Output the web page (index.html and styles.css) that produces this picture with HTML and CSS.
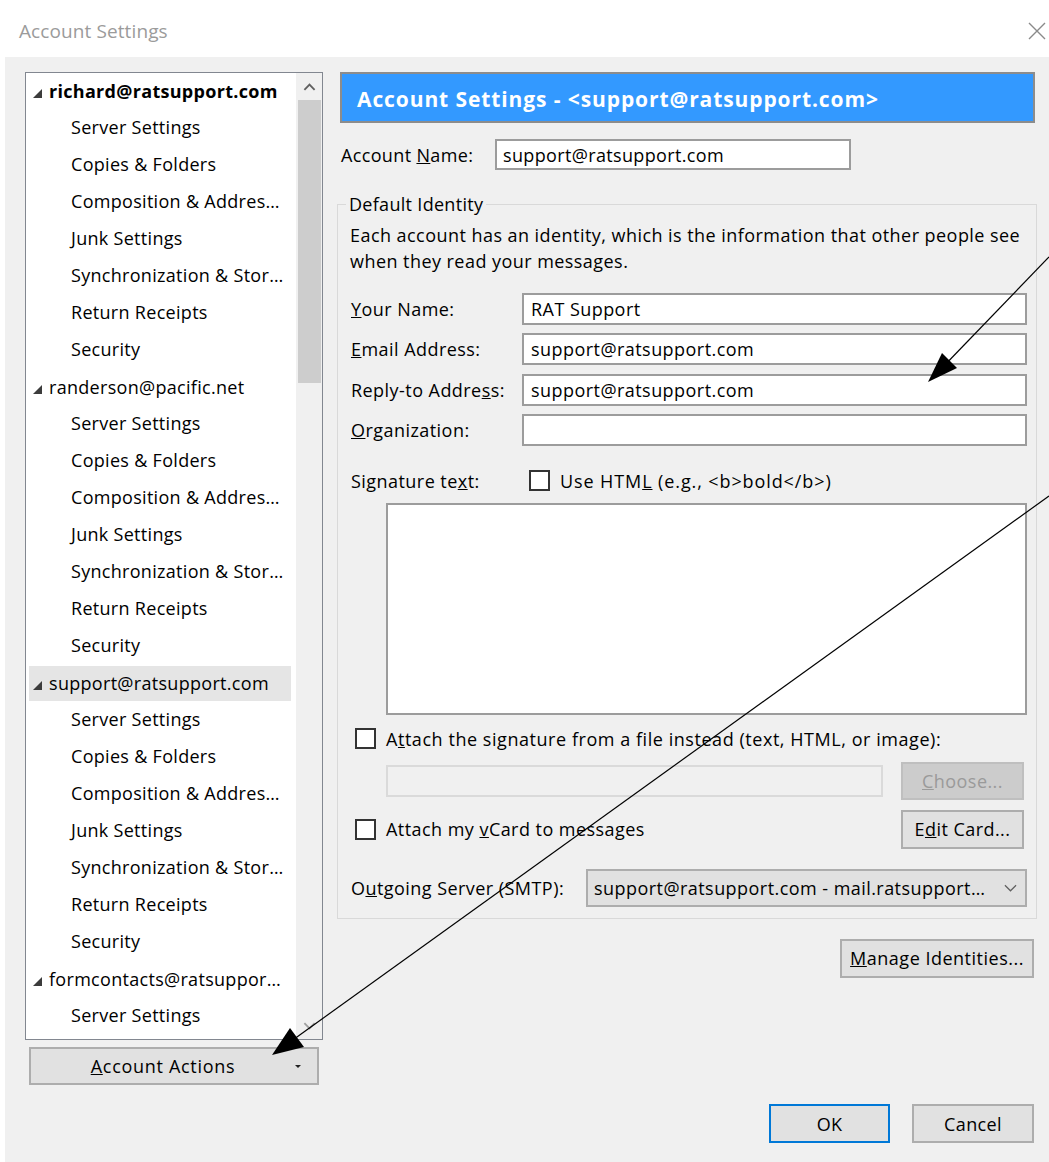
FILE: index.html
```html
<!DOCTYPE html>
<html lang="en">
<head>
<meta charset="utf-8">
<title>Account Settings</title>
<link rel="stylesheet" href="styles.css">
</head>
<body>
<div class="window">
  <header class="titlebar">
    <span class="title">Account Settings</span>
    <svg class="close" viewBox="0 0 18 18" aria-hidden="true">
      <path d="M1 1 L17 17 M17 1 L1 17" stroke="#8a8a8a" stroke-width="1.4" fill="none"/>
    </svg>
  </header>

  <div class="dialog">
    <aside class="sidebar">
      <div class="tree">
        <ul class="tree-list">
          <li class="acct bold"><span class="twisty"></span>richard@ratsupport.com</li>
          <li>Server Settings</li>
          <li>Copies &amp; Folders</li>
          <li>Composition &amp; Addres…</li>
          <li>Junk Settings</li>
          <li>Synchronization &amp; Stor…</li>
          <li>Return Receipts</li>
          <li>Security</li>
          <li class="acct"><span class="twisty"></span>randerson@pacific.net</li>
          <li>Server Settings</li>
          <li>Copies &amp; Folders</li>
          <li>Composition &amp; Addres…</li>
          <li>Junk Settings</li>
          <li>Synchronization &amp; Stor…</li>
          <li>Return Receipts</li>
          <li>Security</li>
          <li class="acct sel"><span class="twisty"></span>support@ratsupport.com</li>
          <li>Server Settings</li>
          <li>Copies &amp; Folders</li>
          <li>Composition &amp; Addres…</li>
          <li>Junk Settings</li>
          <li>Synchronization &amp; Stor…</li>
          <li>Return Receipts</li>
          <li>Security</li>
          <li class="acct"><span class="twisty"></span>formcontacts@ratsuppor…</li>
          <li>Server Settings</li>
        </ul>
        <div class="scrollbar">
          <div class="sb-arrow">
            <svg viewBox="0 0 14 10" aria-hidden="true"><path d="M1.5 8 L7 2.5 L12.5 8" stroke="#606060" stroke-width="2" fill="none"/></svg>
          </div>
          <div class="sb-thumb"></div>
          <div class="sb-track"></div>
          <div class="sb-arrow">
            <svg viewBox="0 0 14 10" aria-hidden="true"><path d="M1.5 2 L7 7.5 L12.5 2" stroke="#a0a0a0" stroke-width="2" fill="none"/></svg>
          </div>
        </div>
      </div>
      <button class="btn actions"><span class="lbl"><u>A</u>ccount Actions</span><span class="caret"></span></button>
    </aside>

    <main class="panel">
      <div class="banner">Account Settings - &lt;support@ratsupport.com&gt;</div>

      <div class="acct-name">
        <span class="acct-label">Account <u>N</u>ame:</span>
        <div class="field name-field">support@ratsupport.com</div>
      </div>

      <fieldset class="identity">
        <legend>Default Identity</legend>
        <p class="desc">Each account has an identity, which is the information that other people see<br>when they read your messages.</p>

        <div class="rows">
          <div class="row"><span class="lab"><u>Y</u>our Name:</span><div class="field">RAT Support</div></div>
          <div class="row"><span class="lab"><u>E</u>mail Address:</span><div class="field">support@ratsupport.com</div></div>
          <div class="row"><span class="lab">Reply-to Addre<u>s</u>s:</span><div class="field">support@ratsupport.com</div></div>
          <div class="row"><span class="lab"><u>O</u>rganization:</span><div class="field"></div></div>
        </div>

        <div class="sig-row">
          <span class="sig-lab">Signature te<u>x</u>t:</span>
          <span class="check"></span>
          <span class="html-hint">Use HTM<u>L</u> (e.g., &lt;b&gt;bold&lt;/b&gt;)</span>
        </div>
        <div class="sig-box"></div>

        <div class="attach">
          <span class="check"></span>
          <span>A<u>t</u>tach the signature from a file instead (text, HTML, or image):</span>
        </div>
        <div class="file-row">
          <div class="file-field"></div>
          <button class="btn small disabled"><u>C</u>hoose...</button>
        </div>

        <div class="vcard-row">
          <div class="vcard">
            <span class="check"></span>
            <span>Attach my <u>v</u>Card to messages</span>
          </div>
          <button class="btn small tall">E<u>d</u>it Card...</button>
        </div>

        <div class="smtp-row">
          <span class="smtp-lab">O<u>u</u>tgoing Server (SMTP):</span>
          <div class="select">
            <span>support@ratsupport.com - mail.ratsupport…</span>
            <svg viewBox="0 0 14 8" aria-hidden="true"><path d="M1 1 L7 7 L13 1" stroke="#606060" stroke-width="1.3" fill="none"/></svg>
          </div>
        </div>
      </fieldset>

      <button class="btn manage"><u>M</u>anage Identities...</button>

      <div class="footer">
        <button class="btn ok">OK</button>
        <button class="btn cancel">Cancel</button>
      </div>
    </main>
  </div>

  <svg class="annotations" viewBox="0 0 1049 1162" aria-hidden="true">
    <line x1="1049" y1="257" x2="940" y2="370" stroke="#000" stroke-width="1.2"/>
    <polygon points="928,382 942,353 957,368" fill="#000"/>
    <line x1="1049" y1="496" x2="290" y2="1042" stroke="#000" stroke-width="1.2"/>
    <polygon points="272,1055 290,1028 304,1047" fill="#000"/>
  </svg>
</div>
</body>
</html>
```

FILE: styles.css
```css
body {
  margin: 0;
  background: #ffffff;
  font-family: "Open Sans", "Noto Sans", sans-serif;
  font-size: 18px;
  letter-spacing: 0.35px;
  color: #000;
}

.window {
  position: relative;
  width: 1049px;
  height: 1162px;
  overflow: hidden;
}

/* ---- title bar ---- */
.titlebar {
  height: 57px;
  box-sizing: border-box;
  padding: 5px 3px 0 19px;
  display: flex;
  align-items: center;
  justify-content: space-between;
}

.title {
  color: #9b9b9b;
  font-size: 19px;
  letter-spacing: 0.1px;
}

.close {
  width: 18px;
  height: 18px;
}

/* ---- dialog body ---- */
.dialog {
  margin-left: 5px;
  height: 1105px;
  box-sizing: border-box;
  background: #f0f0f0;
  padding: 15px 12px 0 20px;
  display: flex;
  gap: 14px;
}

.sidebar {
  width: 298px;
  flex: none;
  display: flex;
  flex-direction: column;
  gap: 7px;
}

.tree {
  height: 968px;
  box-sizing: border-box;
  border: 1px solid #828790;
  background: #fff;
  display: flex;
}

.tree-list {
  flex: 1;
  margin: 0;
  padding: 0 5px 0 3px;
  list-style: none;
  overflow: hidden;
  letter-spacing: 0.3px;
}

.tree-list li {
  height: 37px;
  line-height: 35px;
  white-space: nowrap;
  padding-left: 42px;
}

.tree-list li.acct {
  padding-left: 4px;
  display: flex;
  align-items: center;
  gap: 7px;
}

.tree-list li.bold {
  font-weight: 700;
}

.tree-list li.sel {
  background: linear-gradient(#e5e5e5, #e5e5e5) 0 1px / 100% 35px no-repeat;
}

.twisty {
  width: 0;
  height: 0;
  border-left: 9px solid transparent;
  border-bottom: 9px solid #3c3c3c;
  margin-top: 4px;
}

.scrollbar {
  width: 26px;
  flex: none;
  background: #f0f0f0;
  display: flex;
  flex-direction: column;
  align-items: center;
}

.sb-arrow {
  height: 27px;
  display: flex;
  align-items: center;
  justify-content: center;
}

.sb-arrow svg {
  width: 13px;
  height: 10px;
}

.sb-thumb {
  width: 23px;
  height: 283px;
  background: #cdcdcd;
}

.sb-track {
  flex: 1;
}

/* ---- buttons ---- */
.btn {
  font: inherit;
  letter-spacing: inherit;
  color: #000;
  background: #e1e1e1;
  border: 2px solid #adadad;
  padding: 0;
  box-sizing: border-box;
  display: flex;
  align-items: center;
  justify-content: center;
}

.actions {
  margin: 0 4px;
  height: 38px;
  letter-spacing: 0.7px;
}

.actions .lbl {
  flex: 1;
  text-align: center;
}

.caret {
  width: 0;
  height: 0;
  border-left: 3px solid transparent;
  border-right: 3px solid transparent;
  border-top: 3px solid #222;
  margin-right: 16px;
}

/* ---- right panel ---- */
.panel {
  width: 700px;
  flex: none;
  display: flex;
  flex-direction: column;
}

.banner {
  height: 51px;
  box-sizing: border-box;
  margin: 0 2px 0 3px;
  background: #3399ff;
  border: 2px solid #8c8c8c;
  color: #fff;
  font-weight: 700;
  font-size: 21px;
  letter-spacing: 0.9px;
  padding: 2px 0 0 15px;
  display: flex;
  align-items: center;
  white-space: nowrap;
}

.acct-name {
  margin-top: 16px;
  padding-left: 4px;
  display: flex;
  align-items: center;
}

.acct-label {
  width: 154px;
}

.field {
  height: 32px;
  box-sizing: border-box;
  border: 2px solid #9c9c9c;
  background: #fff;
  padding-left: 7px;
  display: flex;
  align-items: center;
  white-space: nowrap;
  flex: 1;
}

.name-field {
  flex: none;
  width: 356px;
  height: 31px;
  padding-left: 6px;
}

.identity {
  margin: 21px 0 0;
  padding: 0 9px 11px 12px;
  border: 1px solid #d9d9d9;
  min-width: 0;
  letter-spacing: 0.45px;
}

.identity legend {
  padding: 0 3px;
  margin-left: -4px;
  line-height: 26px;
  letter-spacing: 0.3px;
}

.desc {
  margin: 5px 0 0;
  line-height: 26px;
  white-space: nowrap;
}

.rows {
  margin-top: 19px;
  display: flex;
  flex-direction: column;
  gap: 8.3px;
}

.row {
  display: flex;
  align-items: center;
}

.lab {
  width: 172px;
  flex: none;
  padding-left: 1px;
  box-sizing: border-box;
}

.check {
  width: 21px;
  height: 21px;
  flex: none;
  box-sizing: border-box;
  border: 2px solid #333;
  background: #fff;
}

.sig-row {
  margin-top: 22px;
  height: 26px;
  display: flex;
  align-items: center;
  gap: 10px;
  padding-left: 1px;
  white-space: nowrap;
}

.sig-lab {
  width: 168px;
}

.html-hint {
  letter-spacing: 0.9px;
}

.sig-box {
  margin: 9px 0 0 36px;
  height: 212px;
  box-sizing: border-box;
  border: 2px solid #9c9c9c;
  background: #fff;
}

.attach {
  margin-top: 11px;
  padding-left: 5px;
  height: 26px;
  display: flex;
  align-items: center;
  gap: 10px;
  white-space: nowrap;
  letter-spacing: 0.55px;
}

.file-row {
  margin-top: 10px;
  padding-left: 36px;
  padding-right: 3px;
  display: flex;
  align-items: center;
  justify-content: space-between;
}

.file-field {
  width: 497px;
  height: 32px;
  box-sizing: border-box;
  border: 2px solid #dadada;
  background: #f0f0f0;
}

.small {
  width: 123px;
  height: 38px;
}

.tall {
  height: 39px;
}

.disabled {
  background: #cccccc;
  border-color: #bfbfbf;
  color: #9a9a9a;
}

.vcard-row {
  margin-top: 10px;
  padding-left: 5px;
  padding-right: 3px;
  display: flex;
  align-items: center;
  justify-content: space-between;
}

.vcard {
  display: flex;
  align-items: center;
  gap: 10px;
}

.smtp-row {
  margin-top: 20px;
  display: flex;
  align-items: center;
}

.smtp-lab {
  width: 236px;
  flex: none;
  padding-left: 1px;
  box-sizing: border-box;
  white-space: nowrap;
}

.select {
  flex: 1;
  min-width: 0;
  height: 38px;
  box-sizing: border-box;
  background: #e1e1e1;
  border: 2px solid #adadad;
  padding: 0 8px 0 6px;
  display: flex;
  align-items: center;
  justify-content: space-between;
  white-space: nowrap;
  letter-spacing: 0.45px;
}

.select svg {
  width: 13px;
  height: 8px;
  flex: none;
}

.manage {
  margin-top: 20px;
  margin-right: 3px;
  align-self: flex-end;
  width: 194px;
  height: 39px;
  letter-spacing: 0.5px;
}

.footer {
  margin-top: auto;
  margin-bottom: 19px;
  padding-right: 3px;
  display: flex;
  justify-content: flex-end;
  gap: 22px;
}

.ok {
  width: 121px;
  height: 39px;
  border-color: #0078d7;
}

.cancel {
  width: 122px;
  height: 39px;
}

/* ---- callout arrows drawn over the dialog ---- */
.annotations {
  position: absolute;
  left: 0;
  top: 0;
  width: 1049px;
  height: 1162px;
  pointer-events: none;
}
```
